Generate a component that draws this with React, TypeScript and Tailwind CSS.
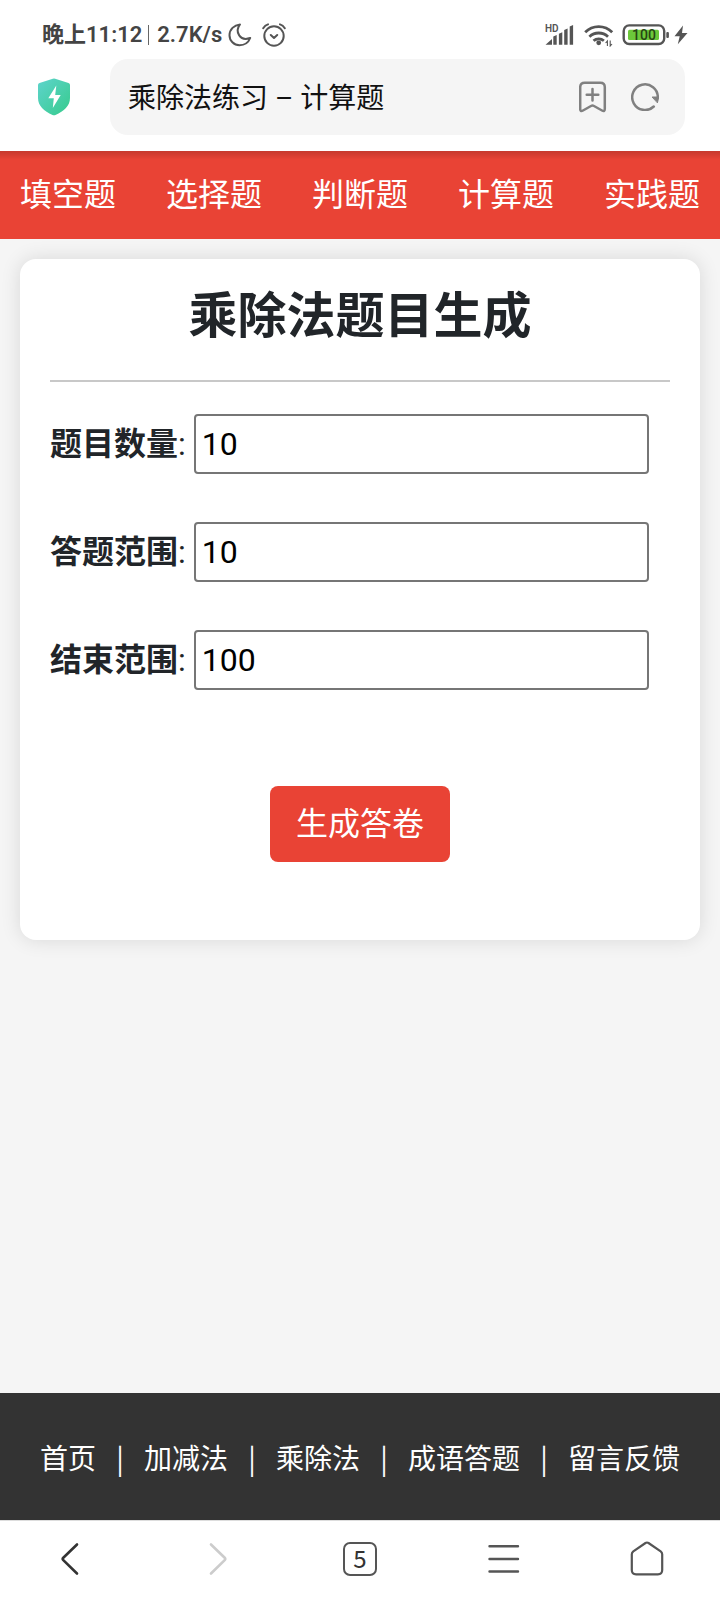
import { useState } from "react";

const topics = ["填空题", "选择题", "判断题", "计算题", "实践题"];
const footerLinks = ["首页", "加减法", "乘除法", "成语答题", "留言反馈"];

function MoonIcon() {
  return (
    <svg className="size-6" viewBox="0 0 24 24" fill="none" stroke="#555" strokeWidth="2" strokeLinejoin="round">
      <path d="M12 1.500C6 2 1.500 6.500 1.500 12.200c0 5.600 4.400 10 10 10 4.800 0 9-2.900 10.700-7.200-5 1.800-9 .4-11-2.600C9 9 9.400 4.800 12 1.500z" />
    </svg>
  );
}

function AlarmIcon() {
  return (
    <svg className="size-6" viewBox="0 0 24 24" fill="none" stroke="#555" strokeWidth="2" strokeLinecap="round" strokeLinejoin="round">
      <circle cx="12" cy="13" r="9.700" />
      <path d="M1.200 5.200Q3 2.400 6 1.400M22.800 5.200Q21 2.400 18 1.400M8.800 12l3.200 3 3.200-3" />
    </svg>
  );
}

function SignalIcon() {
  return (
    <svg className="h-[22px] w-[29px] overflow-visible" viewBox="0 0 29 22" fill="#555">
      <text x="0" y="8" fontSize="10" fontWeight="600" fontFamily="Roboto, sans-serif">HD</text>
      <path d="M.5 20.700L7 15v5.700zM8.300 12.500l3.400-1.500v9.700H8.300zM13.900 9.800l3.400-1.500v12.400h-3.400zM19.200 6l3.400-1.500v16.200h-3.400zM24.700 2.500L28.100 1v19.700h-3.400z" />
    </svg>
  );
}

function WifiIcon() {
  return (
    <svg className="h-[23px] w-[30px]" viewBox="0 0 30 23" fill="none" stroke="#555" strokeWidth="2.800">
      <path d="M1.200 8.300A19 19 0 0 1 28.200 8.300M5.400 12.700A13.500 13.500 0 0 1 24 12.700M9.500 16.700A8 8 0 0 1 19.900 16.700" />
      <circle cx="14.700" cy="18.800" r="2.400" fill="#555" stroke="none" />
      <path d="M23.400 22v-5l-1.800 2M26.200 16.500v5.500l1.800-2" strokeWidth="1.100" />
    </svg>
  );
}

function BatteryIcon() {
  return (
    <svg className="h-[22px] w-[48px]" viewBox="0 0 48 22" fill="none">
      <rect x="1.700" y="1.400" width="40.500" height="18.600" rx="5.500" stroke="#555" strokeWidth="2.400" />
      <rect x="6" y="5.800" width="31" height="10.200" rx="1.500" fill="#6cc83a" />
      <rect x="44.300" y="8" width="2.600" height="6" rx="1" fill="#555" />
      <text x="22" y="15.900" fontSize="14" fontWeight="500" textAnchor="middle" fontFamily="Roboto, sans-serif" fill="#264513">100</text>
    </svg>
  );
}

function BoltIcon() {
  return (
    <svg className="h-[20px] w-[14px]" viewBox="0 0 14 20" fill="#555">
      <path d="M9 .5L.5 11.200h5.200L3.800 19.200 13.500 8H8z" />
    </svg>
  );
}

function ShieldIcon() {
  return (
    <svg className="h-[38px] w-8" viewBox="0 0 32 38">
      <defs>
        <linearGradient id="shield" x1="0" y1="0" x2="1" y2="1">
          <stop offset="0.100" stopColor="#5ad3c6" />
          <stop offset="1" stopColor="#36cb8c" />
        </linearGradient>
      </defs>
      <path
        d="M14.800.8q1.200-.5 2.400 0L30.500 5q1.500.6 1.500 2v13c0 8-6 13-14.500 17q-1.500.7-3 0C6 33 0 28 0 20V7q0-1.400 1.500-2z"
        fill="url(#shield)"
      />
      <path d="M18.300 7.500L10.300 20.300h5.500l-1 9.700 7.900-13h-5.500z" fill="#fff" />
    </svg>
  );
}

function BookmarkIcon() {
  return (
    <svg className="h-8 w-7" viewBox="0 0 28 32" fill="none" stroke="#808080" strokeWidth="2.500" strokeLinecap="round" strokeLinejoin="round">
      <path d="M5.700 1.800h15.600q4.500 0 4.500 4.500v21.500q0 3.200-2.800 1.700L15 25q-1.500-.8-3 0L4 29.500q-2.800 1.500-2.800-1.700V6.300Q1.200 1.800 5.700 1.800zM13.500 8v11.500M7.700 13.700h11.600" />
    </svg>
  );
}

function ReloadIcon() {
  return (
    <svg className="size-7" viewBox="0 0 28 28" fill="none" stroke="#808080" strokeWidth="2.500" strokeLinecap="round">
      <path d="M22.800 23.500A12.800 12.800 0 1 1 26.800 14.500" />
      <path d="M21.500 14h6.300l-1.300 5.500z" fill="#808080" strokeWidth="1" strokeLinejoin="round" />
    </svg>
  );
}

function StatusBar() {
  return (
    <div className="flex h-[59px] items-center justify-between pt-[11px] pr-8 pl-[42px] text-[22px] leading-6 font-semibold text-[#444]">
      <div className="flex items-center">
        <span>晚上11:12</span>
        <span className="mr-2 ml-1.5 h-5 w-px bg-[#666]" />
        <span>2.7K/s</span>
        <span className="ml-1.5 flex gap-[10px]">
          <MoonIcon />
          <AlarmIcon />
        </span>
      </div>
      <div className="flex items-center">
        <SignalIcon />
        <span className="ml-[10px]"><WifiIcon /></span>
        <span className="ml-2"><BatteryIcon /></span>
        <span className="ml-1"><BoltIcon /></span>
      </div>
    </div>
  );
}

function AddressBar() {
  return (
    <div className="flex items-center pr-[35px] pb-4 pl-[38px]">
      <ShieldIcon />
      <div className="ml-10 flex h-[76px] flex-1 items-center rounded-[18px] bg-[#f5f5f5] pr-[26px] pl-[18px]">
        <input
          className="min-w-0 flex-1 bg-transparent pt-1 text-[28px] leading-10 text-[#111] outline-none"
          aria-label="网址"
          defaultValue="乘除法练习 – 计算题"
        />
        <button aria-label="收藏"><BookmarkIcon /></button>
        <button className="ml-6" aria-label="刷新"><ReloadIcon /></button>
      </div>
    </div>
  );
}

type FieldProps = {
  id: string;
  label: string;
  value: string;
  onChange: (v: string) => void;
};

function Field({ id, label, value, onChange }: FieldProps) {
  return (
    <div className="mr-[21px] flex items-center gap-2">
      <label htmlFor={id} className="text-[32px] leading-10 text-[#212529]">
        <b>{label}</b>:
      </label>
      <input
        id={id}
        type="number"
        className="h-[60px] min-w-0 flex-1 rounded-[4px] border-2 border-[#767676] bg-white px-[6px] text-[32px] text-black"
        value={value}
        onChange={(e) => onChange(e.target.value)}
      />
    </div>
  );
}

function BottomBar() {
  return (
    <div className="grid h-20 grid-cols-5 place-items-center border-t border-[#ddd] bg-white pb-1">
      <button aria-label="后退">
        <svg className="size-9" viewBox="0 0 36 36" fill="none" stroke="#333" strokeWidth="2.600" strokeLinecap="round" strokeLinejoin="round">
          <path d="M23 3.500L9.300 16.800q-1.200 1.200 0 2.400L23 32.500" />
        </svg>
      </button>
      <button aria-label="前进">
        <svg className="size-9" viewBox="0 0 36 36" fill="none" stroke="#ccc" strokeWidth="2.600" strokeLinecap="round" strokeLinejoin="round">
          <path d="M13 3.500L26.700 16.800q1.200 1.200 0 2.400L13 32.500" />
        </svg>
      </button>
      <button
        className="flex size-[34px] justify-center rounded-[7px] border-2 border-[#555] font-['Noto_Sans_CJK_SC',sans-serif] text-2xl leading-7 text-[#333]"
        aria-label="标签页"
      >
        5
      </button>
      <button aria-label="菜单">
        <svg className="size-9" viewBox="0 0 36 36" fill="none" stroke="#555" strokeWidth="2.400" strokeLinecap="round">
          <path d="M3.500 5.200h28.500M3.500 18h28.500M3.500 30.500h28.500" />
        </svg>
      </button>
      <button aria-label="主页">
        <svg className="size-9" viewBox="0 0 36 36" fill="none" stroke="#555" strokeWidth="2.200" strokeLinejoin="round">
          <path d="M15.500 2L3.300 10.300q-1.500 1.100-1.500 3V29q0 4.300 4.300 4.300h21.800q4.300 0 4.300-4.300V13.300q0-1.900-1.500-3L18.500 2q-1.500-1-3 0z" />
        </svg>
      </button>
    </div>
  );
}

export default function App() {
  const [count, setCount] = useState("10");
  const [start, setStart] = useState("10");
  const [end, setEnd] = useState("100");

  return (
    <div className="flex min-h-screen flex-col bg-[#f5f5f5] font-['Roboto','Noto_Sans_CJK_SC',sans-serif]">
      <header className="bg-white">
        <StatusBar />
        <AddressBar />
      </header>

      {/* Topic tabs */}
      <nav className="flex h-[88px] items-center justify-between bg-[#e94335] bg-linear-to-b from-black/15 to-transparent to-10% px-5 text-[32px] leading-10 text-white">
        {topics.map((t) => (
          <a key={t} href="#">{t}</a>
        ))}
      </nav>

      <main className="flex-1 p-5">
        <div className="rounded-2xl bg-white px-[30px] pt-[26px] pb-[78px] shadow-[0_0_20px_rgba(0,0,0,0.12)]">
          <h1 className="text-center text-[49px] leading-[64px] font-bold text-[#212529]">
            乘除法题目生成
          </h1>
          <hr className="mt-[31px] border-t-2 border-[#c8c8c8]" />

          <form className="mt-8" onSubmit={(e) => e.preventDefault()}>
            <div className="flex flex-col gap-12">
              <Field id="count" label="题目数量" value={count} onChange={setCount} />
              <Field id="start" label="答题范围" value={start} onChange={setStart} />
              <Field id="end" label="结束范围" value={end} onChange={setEnd} />
            </div>
            <div className="mt-24 text-center">
              <button className="h-[76px] w-[180px] rounded-lg bg-[#e94335] align-top text-[32px] text-white">
                生成答卷
              </button>
            </div>
          </form>
        </div>
      </main>

      <footer className="flex h-[127px] items-center justify-between bg-[#333] px-10 font-['Noto_Sans_CJK_SC',sans-serif] text-[28px] leading-10 text-white">
        {footerLinks.map((l, i) => (
          <div key={l} className="contents">
            {i > 0 && <span>|</span>}
            <a href="#">{l}</a>
          </div>
        ))}
      </footer>

      <BottomBar />
    </div>
  );
}
